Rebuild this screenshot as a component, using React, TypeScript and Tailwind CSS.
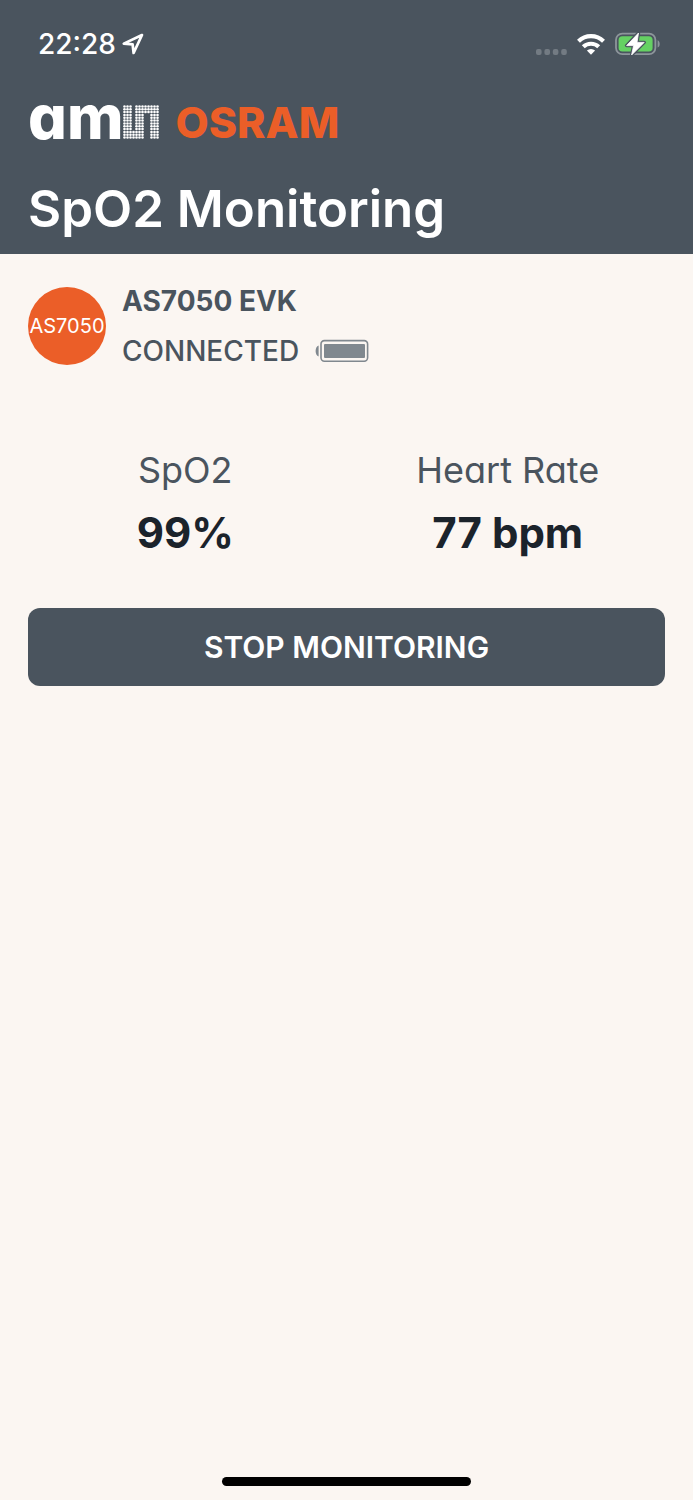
import React from "react";

function dotVisible(col: number, row: number): boolean {
  const left = col <= 2;
  const middle = col >= 4 && col <= 6;
  const right = col >= 9;
  const bottomLink = row >= 9 && col <= 6;
  const topLink = row <= 2 && col >= 4;
  return left || middle || right || bottomLink || topLink;
}

function DotMark() {
  const dots: React.ReactNode[] = [];
  for (let row = 0; row < 12; row++) {
    for (let col = 0; col < 12; col++) {
      if (dotVisible(col, row)) {
        dots.push(<circle key={`${col}-${row}`} cx={col * 3 + 1.5} cy={row * 3 + 1.5} r="1.3" />);
      }
    }
  }
  return (
    <svg viewBox="0 0 36 36" className="h-[34px] w-9" preserveAspectRatio="none" fill="#fff" aria-hidden="true">
      {dots}
    </svg>
  );
}

function LocationIcon() {
  return (
    <svg viewBox="0 0 22 22" className="size-[22px]" fill="none" stroke="#fff" strokeWidth="2.7" strokeLinejoin="round" aria-hidden="true">
      <path d="M20 2 L1.8 10.6 L10.6 11.3 L11.6 20 Z" />
    </svg>
  );
}

function SignalDots() {
  return (
    <svg viewBox="0 0 31 6" className="mt-4 h-1.5 w-[31px]" fill="#737b83" aria-hidden="true">
      <rect x="0" width="5.6" height="6" rx="2" />
      <rect x="8.4" width="5.6" height="6" rx="2" />
      <rect x="16.8" width="5.6" height="6" rx="2" />
      <rect x="25.2" width="5.6" height="6" rx="2" />
    </svg>
  );
}

function WifiIcon() {
  return (
    <svg viewBox="0 0 28 22" className="h-[22px] w-7" fill="none" stroke="#fff" strokeWidth="4.2" aria-hidden="true">
      <path d="M1.5 8.2 A18 18 0 0 1 26.5 8.2" />
      <path d="M6.3 13.8 A11.2 11.2 0 0 1 21.7 13.8" />
      <path d="M14 21.8 L9.9 17.6 A6 6 0 0 1 18.1 17.6 Z" fill="#fff" stroke="none" />
    </svg>
  );
}

function ChargingIcon() {
  return (
    <svg viewBox="0 0 46 24" className="h-6 w-[46px]" aria-hidden="true">
      <rect x="1" y="1.6" width="39.4" height="20.6" rx="6.4" fill="none" stroke="#8d959b" strokeWidth="1.8" />
      <rect x="3.6" y="4.2" width="34" height="15.4" rx="3.8" fill="#65d163" />
      <path d="M42.6 8.2 C45.4 9.2 45.4 14.6 42.6 15.6 Z" fill="#8d959b" />
      <path d="M23.5 1 L11.6 13.6 H18.6 L16.6 23 L29.2 10.4 H22 Z" fill="#fff" stroke="#4a545e" strokeWidth="3.4" strokeLinejoin="round" />
      <path d="M23.5 1 L11.6 13.6 H18.6 L16.6 23 L29.2 10.4 H22 Z" fill="#fff" stroke="#fff" strokeWidth="0.8" strokeLinejoin="round" />
    </svg>
  );
}

function DeviceBattery() {
  return (
    <svg viewBox="0 0 54 24" className="h-6 w-[54px]" role="img" aria-label="Battery full">
      <path d="M3.6 6.4 V17.4 C-0.4 16.4 -0.4 7.4 3.6 6.4 Z" fill="#80888f" />
      <rect x="6" y="1.6" width="46.6" height="20.6" rx="3.4" fill="none" stroke="#80888f" strokeWidth="1.6" />
      <rect x="9" y="5" width="41" height="14" rx="1" fill="#80888f" />
    </svg>
  );
}

function Metric({ label, value }: { label: string; value: string }) {
  return (
    <div className="flex flex-col items-center whitespace-nowrap">
      <dt className="text-[36px] leading-[48px]">{label}</dt>
      <dd className="mt-3 text-[42px] leading-[54px] font-bold text-[#1b232b]">{value}</dd>
    </div>
  );
}

export default function App() {
  return (
    <div className="flex min-h-screen flex-col bg-[#fbf6f2] font-['Inter','Noto_Sans',sans-serif] text-[#4a545e] [font-feature-settings:'cv11']">
      <header className="bg-[#4a545e] px-7 pb-3 text-white">
        <div className="flex h-[88px] items-center justify-between pr-1 pl-2.5">
          <div className="flex items-center gap-1.5">
            <span className="text-[28px] leading-9 font-medium">22:28</span>
            <LocationIcon />
          </div>
          <div className="flex items-center gap-2.5">
            <SignalDots />
            <WifiIcon />
            <ChargingIcon />
          </div>
        </div>
        <div className="flex h-[68px] items-center gap-4">
          <div className="flex items-center">
            <span className="mb-2.5 text-[61px] leading-[68px] font-extrabold">am</span>
            <DotMark />
          </div>
          <span className="text-[43px] leading-[68px] font-extrabold text-[#eb5e28]">OSRAM</span>
        </div>
        <h1 className="mt-5 text-[51px] leading-[66px] font-semibold whitespace-nowrap">SpO2 Monitoring</h1>
      </header>

      <main className="flex-1 px-7">
        <section className="flex items-center gap-4 pt-[22px]">
          <div className="flex size-[78px] shrink-0 items-center justify-center rounded-full bg-[#eb5e28] text-[20px] text-white">
            AS7050
          </div>
          <div>
            <h2 className="text-[28px] leading-[50px] font-bold">AS7050 EVK</h2>
            <div className="flex items-center gap-4">
              <span className="text-[28px] leading-[50px] font-medium">CONNECTED</span>
              <DeviceBattery />
            </div>
          </div>
        </section>

        <dl className="-mx-1 mt-[70px] grid grid-cols-2">
          <Metric label="SpO2" value="99%" />
          <Metric label="Heart Rate" value="77 bpm" />
        </dl>

        <button type="button" className="mt-12 h-[78px] w-full rounded-xl bg-[#4a545e] text-[30px] font-semibold text-white">
          STOP MONITORING
        </button>
      </main>

      <div className="mx-auto mb-3.5 h-[9px] w-[36%] rounded-full bg-black" />
    </div>
  );
}
